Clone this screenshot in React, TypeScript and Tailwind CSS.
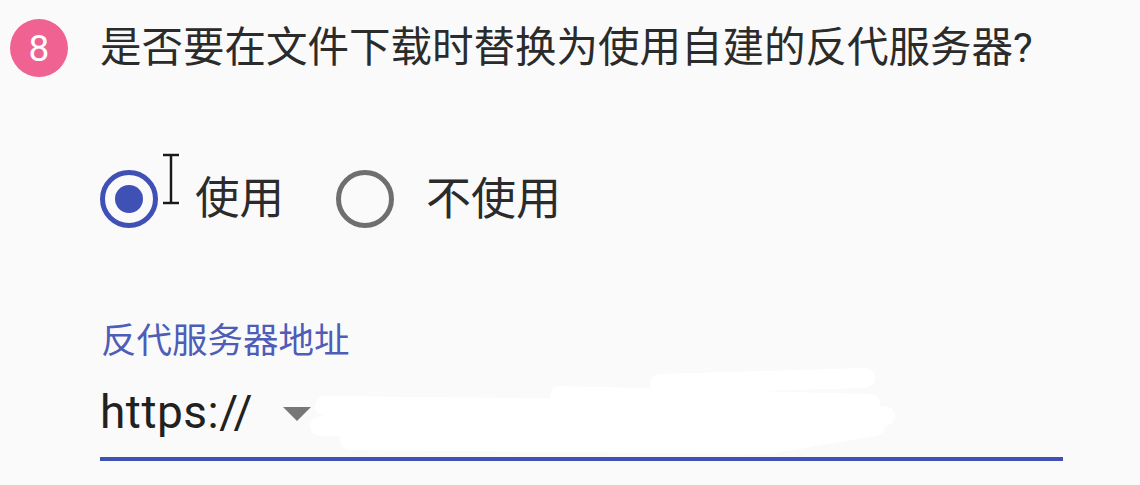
import { useState } from 'react';

const FONT = '"Roboto","Noto Sans CJK SC",sans-serif';

function Radio({ checked }: { checked: boolean }) {
  return (
    <span
      className={
        checked
          ? 'flex h-[58px] w-[58px] shrink-0 items-center justify-center rounded-full border-[5px] border-[#3f51b5]'
          : 'flex h-[58px] w-[58px] shrink-0 items-center justify-center rounded-full border-[5px] border-[#6f6f6f]'
      }
    >
      {checked ? <span className="h-[28px] w-[28px] rounded-full bg-[#3f51b5]" /> : null}
    </span>
  );
}

// mouse I-beam cursor sitting in the screenshot
function IBeam() {
  return (
    <svg
      className="pointer-events-none absolute left-[158px] top-[150px]"
      width="26"
      height="58"
      viewBox="0 0 26 58"
    >
      <path
        d="M5 5h16M13 5v48M5 53h16"
        stroke="#fff"
        strokeWidth="5"
        fill="none"
        strokeLinecap="round"
      />
      <path d="M5 5h16M13 5v48M5 53h16" stroke="#1a1a1a" strokeWidth="2.5" fill="none" />
    </svg>
  );
}

// white scribble that hides the host name
function Redaction() {
  return (
    <svg
      className="pointer-events-none absolute left-[300px] top-[368px]"
      width="600"
      height="92"
      viewBox="0 0 600 92"
    >
      <g stroke="#ffffff" strokeLinecap="round" strokeWidth="20" fill="none">
        <path d="M25 38 L560 44" />
        <path d="M20 58 L565 56" />
        <path d="M50 72 L470 76 L575 58" />
        <path d="M360 16 L565 10" />
        <path d="M260 28 L570 36" />
        <path d="M80 48 L585 48" />
      </g>
    </svg>
  );
}

export default function App() {
  const [useProxy, setUseProxy] = useState(true);

  return (
    <div
      className="relative h-[485px] w-[1140px] overflow-hidden bg-[#fafafa] text-[#2b2b2b]"
      style={{ fontFamily: FONT }}
    >
      <header className="flex items-center gap-[32px] pl-[10px] pt-[19px]">
        <span className="flex h-[58px] w-[58px] shrink-0 items-center justify-center rounded-full bg-[#f06292] text-[37px] leading-none text-white">
          8
        </span>
        <h2 className="text-[41.5px] leading-none font-normal whitespace-nowrap">
          是否要在文件下载时替换为使用自建的反代服务器?
        </h2>
      </header>

      <div className="mt-[93px] flex items-center pl-[100px]">
        <button type="button" className="flex items-center" onClick={() => setUseProxy(true)}>
          <Radio checked={useProxy} />
          <span className="ml-[37px] text-[44.5px] leading-none">使用</span>
        </button>
        <button type="button" className="ml-[52px] flex items-center" onClick={() => setUseProxy(false)}>
          <Radio checked={!useProxy} />
          <span className="ml-[32px] text-[45px] leading-none">不使用</span>
        </button>
      </div>

      <label className="mt-[96px] block pl-[101px] text-[35.5px] leading-none text-[#4d5db8]">
        反代服务器地址
      </label>

      <div className="mt-[29px] ml-[100px] flex w-[963px] items-center border-b-[4px] border-[#3f51b5] pb-[22px]">
        <span className="text-[46px] leading-none tracking-[0.5px] text-[#212121]">https://</span>
        <span className="ml-[30px] mt-[4px] h-0 w-0 border-x-[14px] border-t-[14px] border-x-transparent border-t-[#777]" />
      </div>

      <IBeam />
      <Redaction />
    </div>
  );
}
